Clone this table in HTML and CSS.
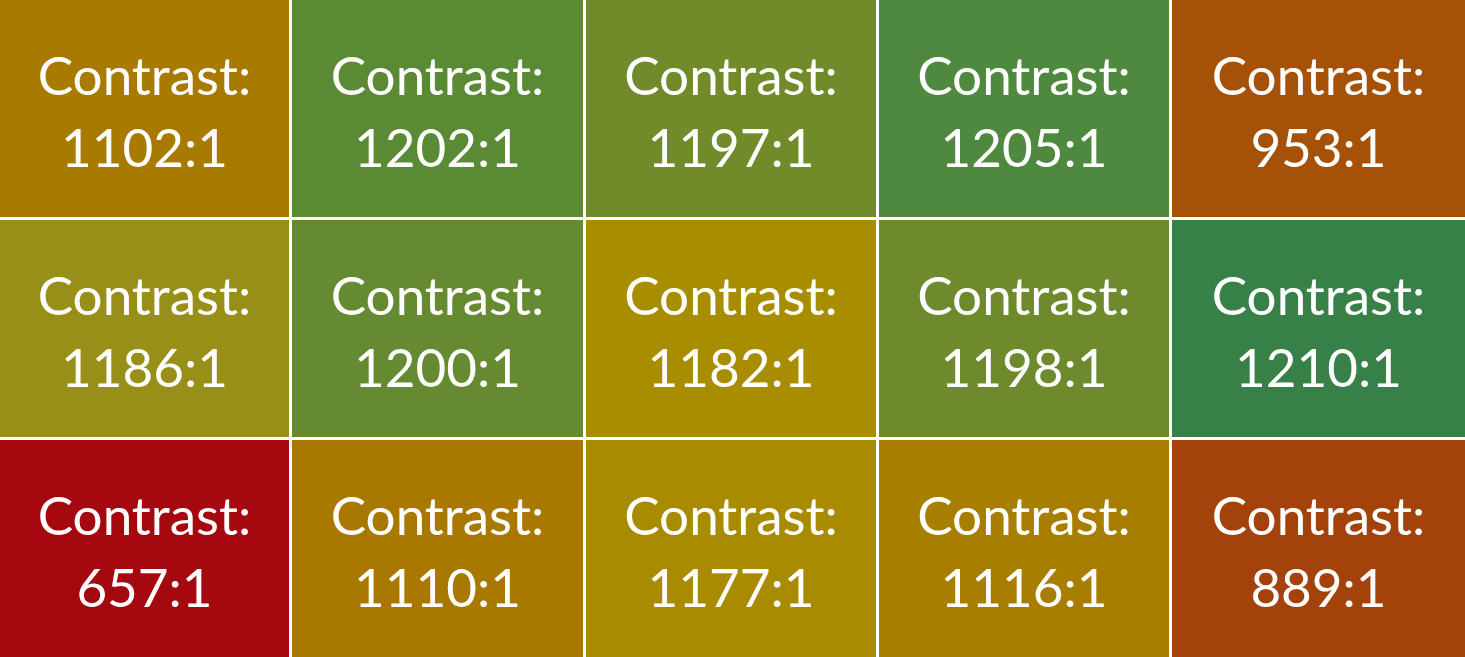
FILE: index.html
```html
<!DOCTYPE html>
<html>
<head>
<meta charset="utf-8">
<link rel="stylesheet" href="styles.css">
</head>
<body>
<div class="grid">
  <div class="cell c-ochre">Contrast:<br>1102:1</div>
  <div class="cell c-g1">Contrast:<br>1202:1</div>
  <div class="cell c-g2">Contrast:<br>1197:1</div>
  <div class="cell c-g3">Contrast:<br>1205:1</div>
  <div class="cell c-or1">Contrast:<br>953:1</div>

  <div class="cell c-olive">Contrast:<br>1186:1</div>
  <div class="cell c-g4">Contrast:<br>1200:1</div>
  <div class="cell c-gold">Contrast:<br>1182:1</div>
  <div class="cell c-g5">Contrast:<br>1198:1</div>
  <div class="cell c-g6">Contrast:<br>1210:1</div>

  <div class="cell c-red">Contrast:<br>657:1</div>
  <div class="cell c-ochre2">Contrast:<br>1110:1</div>
  <div class="cell c-gold2">Contrast:<br>1177:1</div>
  <div class="cell c-ochre3">Contrast:<br>1116:1</div>
  <div class="cell c-or2">Contrast:<br>889:1</div>
</div>
</body>
</html>
```

FILE: styles.css
```css
html, body {
  margin: 0;
  padding: 0;
  background: #ffffff;
}
.grid {
  width: 1465px;
  height: 657px;
  display: grid;
  grid-template-columns: 289px 291px 290px 290px 293px;
  grid-template-rows: 217px 217px 217px;
  column-gap: 3px;
  row-gap: 3px;
  background: #ffffff;
}
.cell {
  display: flex;
  align-items: center;
  justify-content: center;
  text-align: center;
  color: #ffffff;
  font-family: Lato, "Liberation Sans", sans-serif;
  font-size: 53px;
  line-height: 72px;
  padding-top: 4px;
}
.c-ochre { background: #a97a00; }
.c-g1 { background: #5b8a35; }
.c-g2 { background: #718a2a; }
.c-g3 { background: #4f893f; }
.c-or1 { background: #a55208; }
.c-olive { background: #988f18; }
.c-g4 { background: #658a31; }
.c-gold { background: #a88d00; }
.c-g5 { background: #6e8a2d; }
.c-g6 { background: #378148; }
.c-red { background: #a5080f; }
.c-ochre2 { background: #a87800; }
.c-gold2 { background: #a88b00; }
.c-ochre3 { background: #a87e00; }
.c-or2 { background: #a4420b; }
```
